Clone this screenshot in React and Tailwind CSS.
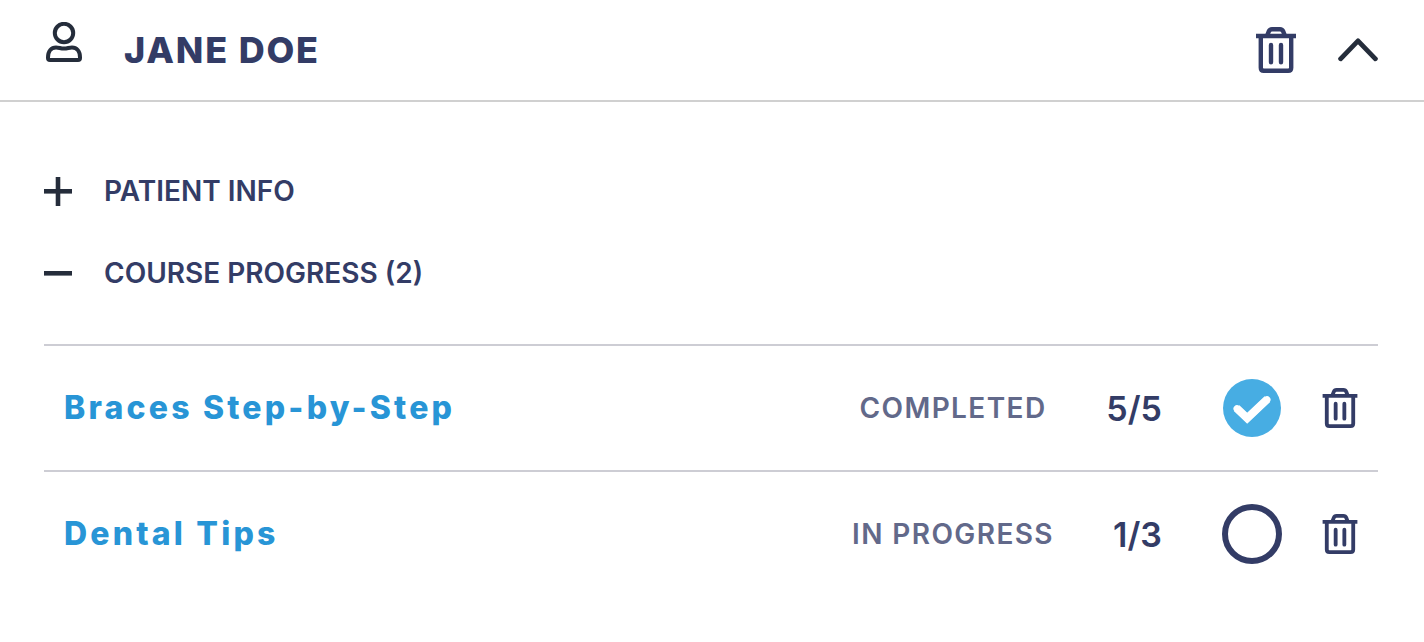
import { useState } from 'react';

const initialCourses = [
  { id: 1, title: 'Braces Step-by-Step', done: 5, total: 5 },
  { id: 2, title: 'Dental Tips', done: 1, total: 3 },
];

function UserIcon() {
  return (
    <svg viewBox="0 0 40 56" className="w-10 h-14 shrink-0" fill="none" stroke="#252d3b" strokeWidth="4" strokeLinejoin="round" aria-hidden="true">
      <circle cx="20" cy="11" r="9.2" />
      <path d="M4 35.5C4 29 7.500 25.500 12 25.500C15 25.500 16.500 26.600 20 26.600C23.500 26.600 25 25.500 28 25.500C32.500 25.500 36 29 36 35.500V36C36 37.300 35.200 38 34 38H6C4.800 38 4 37.300 4 36Z" />
    </svg>
  );
}

function TrashIcon({ className }) {
  return (
    <svg viewBox="0 0 40 46" className={className} fill="none" stroke="#333c66" strokeWidth="4.4" strokeLinejoin="round" aria-hidden="true">
      <path d="M0 9H40" />
      <path d="M11 9L12.800 4.400C13.400 2.900 14.400 2.200 16 2.200H24C25.600 2.200 26.600 2.900 27.200 4.400L29 9" />
      <path d="M4.800 9.500V40.800C4.800 42.800 5.800 43.800 7.800 43.800H32.200C34.200 43.800 35.200 42.800 35.200 40.800V9.500" />
      <path d="M15 18V35.300M25 18V35.300" strokeLinecap="round" />
    </svg>
  );
}

function ChevronIcon({ open }) {
  return (
    <svg viewBox="0 0 40 24" className={`w-10 h-6 ${open ? '' : 'rotate-180'}`} fill="none" stroke="#252d3b" strokeWidth="4.8" strokeLinecap="round" strokeLinejoin="round" aria-hidden="true">
      <path d="M2.600 20.800L20 2.800L37.400 20.800" />
    </svg>
  );
}

function StatusIcon({ completed }) {
  if (completed) {
    return (
      <svg viewBox="0 0 60 60" className="size-15 shrink-0" aria-hidden="true">
        <circle cx="30" cy="30" r="29" fill="#47ade3" />
        <path d="M14.600 30.200L25.200 40.200L45.400 21.200" fill="none" stroke="#fff" strokeWidth="8" />
        <path d="M15 30.600L25.200 40.200L45 21.600" fill="none" stroke="#fff" strokeWidth="7" strokeLinecap="round" />
      </svg>
    );
  }
  return (
    <svg viewBox="0 0 60 60" className="size-15 shrink-0" aria-hidden="true">
      <circle cx="30" cy="30" r="27" fill="none" stroke="#333c66" strokeWidth="6" />
    </svg>
  );
}

function SectionToggle({ label, open, onClick }) {
  return (
    <button
      type="button"
      onClick={onClick}
      aria-expanded={open}
      className="flex w-full items-center gap-8 py-5 text-left text-[28px] leading-[42px] font-semibold text-[#333c66] uppercase"
    >
      <svg viewBox="0 0 28 30" className="w-7 h-[30px] shrink-0" stroke="#252d3b" strokeWidth="4.6" aria-hidden="true">
        <path d="M0 15.300H28" />
        {!open && <path d="M14 1V30" />}
      </svg>
      {label}
    </button>
  );
}

function CourseRow({ course, onRemove }) {
  const completed = course.done === course.total;

  return (
    <li className="flex items-center border-t-2 border-[#cdcdd4] px-5 py-8">
      <a href="#course" className="flex-1 text-[32px] leading-[60px] font-extrabold tracking-widest text-[#2895d6]">
        {course.title}
      </a>
      <span className="w-[210px] text-center text-[28px] font-semibold tracking-wider whitespace-nowrap text-[#62698a] uppercase">
        {completed ? 'Completed' : 'In progress'}
      </span>
      <span className="ml-10 w-16 text-right text-[34px] font-semibold whitespace-nowrap text-[#333c66]">
        {course.done}/{course.total}
      </span>
      <span className="mx-10 pl-5">
        <StatusIcon completed={completed} />
      </span>
      <button type="button" onClick={onRemove} aria-label={`Remove ${course.title}`}>
        <TrashIcon className="w-9 h-10" />
      </button>
    </li>
  );
}

export default function App() {
  const [open, setOpen] = useState(true);
  const [showInfo, setShowInfo] = useState(false);
  const [showCourses, setShowCourses] = useState(true);
  const [courses, setCourses] = useState(initialCourses);

  const removeCourse = (id) => {
    setCourses(courses.filter((course) => course.id !== id));
  };

  return (
    <main className="min-h-screen bg-white font-['Inter',sans-serif]">
      <header className="flex items-center border-b-2 border-[#d0d0d0] pt-5 pr-[46px] pb-5 pl-11">
        <UserIcon />
        <h1 className="ml-10 flex-1 text-[36px] leading-[60px] font-extrabold tracking-wider text-[#333c66] uppercase">Jane Doe</h1>
        <button type="button" aria-label="Delete patient">
          <TrashIcon className="w-10 h-[46px]" />
        </button>
        <button type="button" className="ml-[42px]" onClick={() => setOpen(!open)} aria-label="Toggle patient" aria-expanded={open}>
          <ChevronIcon open={open} />
        </button>
      </header>

      {open && (
        <div className="pt-12 pr-[46px] pb-11 pl-11">
          <SectionToggle label="Patient info" open={showInfo} onClick={() => setShowInfo(!showInfo)} />
          <SectionToggle
            label={`Course progress (${courses.length})`}
            open={showCourses}
            onClick={() => setShowCourses(!showCourses)}
          />
          {showCourses && (
            <ul className="mt-[30px]">
              {courses.map((course) => (
                <CourseRow key={course.id} course={course} onRemove={() => removeCourse(course.id)} />
              ))}
            </ul>
          )}
        </div>
      )}
    </main>
  );
}
